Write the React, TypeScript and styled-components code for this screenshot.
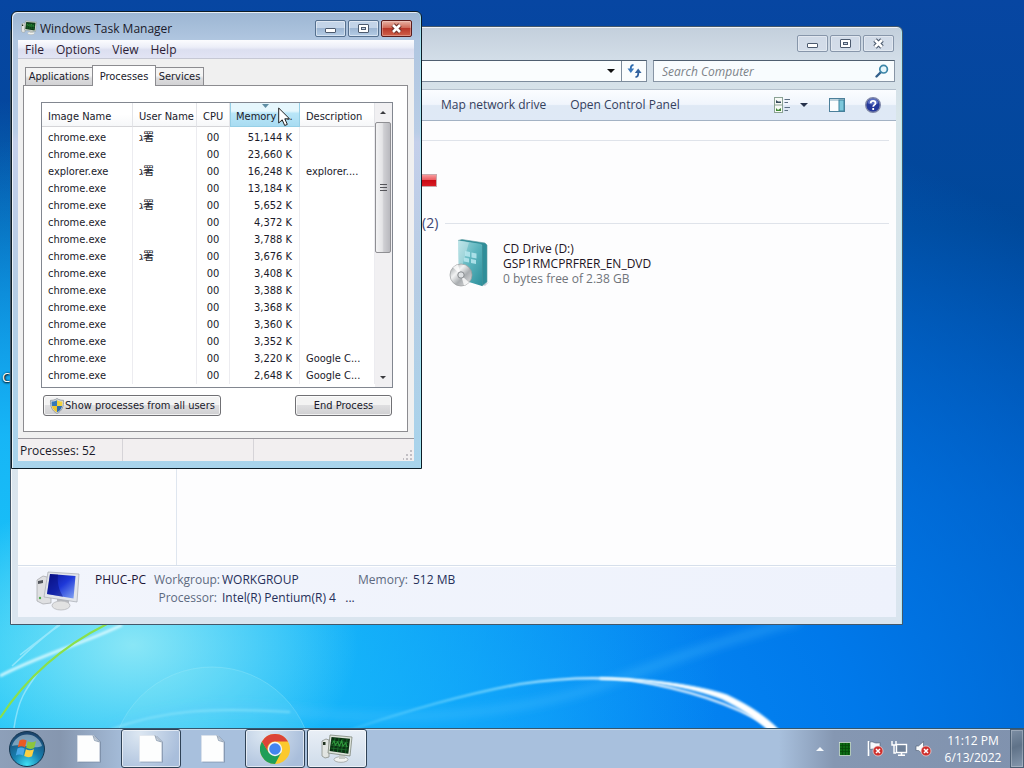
import React from 'react';
import styled, { createGlobalStyle, css } from 'styled-components';

const GlobalStyle = createGlobalStyle`
  *, *::before, *::after { box-sizing: border-box; }
  html, body, #root { height: 100%; }
  body {
    margin: 0;
    overflow: hidden;
    font-family: 'Open Sans', 'Noto Sans', 'Noto Sans CJK JP', sans-serif;
    font-size: 12px;
    color: #1a1a2a;
  }
  button, input { font: inherit; color: inherit; }
`;

/* face of the classic dialog controls: tabs, list and push buttons */
const dialogFont = css`
  font-family: 'DejaVu Sans Condensed', 'Open Sans', 'Noto Sans CJK JP', sans-serif;
  font-size: 11px;
  line-height: 17px;
`;

/* ---------- desktop ---------- */

const Desktop = styled.div`
  position: relative;
  display: flex;
  flex-direction: column;
  height: 100vh;
  overflow: hidden;
  background:
    radial-gradient(ellipse 300px 200px at 13% 84%, rgba(165, 240, 246, 0.8), rgba(120, 230, 250, 0) 75%),
    radial-gradient(ellipse 720px 560px at 0% 86%, #19c6f7 0%, rgba(25, 190, 250, 0.9) 40%, rgba(10, 150, 255, 0) 100%),
    radial-gradient(ellipse 960px 700px at 42% 100%, #0a93fd 0%, rgba(0, 125, 240, 0.9) 45%, rgba(0, 90, 200, 0) 100%),
    linear-gradient(180deg, #0746a2 0%, #00489a 30%, #0051b4 65%, #0055b8 100%);
`;

const WallpaperArt = styled.svg`
  position: absolute;
  inset: 0;
  width: 100%;
  height: 100%;
`;

const WorkArea = styled.main`
  position: relative;
  flex: 1;
  min-height: 0;
`;

const ShortcutLabel = styled.span`
  position: absolute;
  left: 2px;
  top: 369px;
  font-size: 13px;
  line-height: 17px;
  color: #fff;
  text-shadow: 0 1px 2px #000, 1px 0 2px #000;
`;

/* ---------- window chrome ---------- */

const Window = styled.section<{ $active?: boolean }>`
  position: absolute;
  display: flex;
  flex-direction: column;
  border: 1px solid ${p => (p.$active ? '#0c1c26' : '#44586a')};
  border-radius: 6px 6px 0 0;
  background: ${p =>
    p.$active
      ? 'linear-gradient(180deg, #9cb6d3 0, #b0c6e0 28px, #b9cde6 120px, #c4cfea 130px, #b6cce4 60%, #a8d4ec 100%)'
      : 'linear-gradient(180deg, #c3cfdc 0, #d3dee8 34px, #d9e6ea 90px, #dae5ef 100%)'};
  box-shadow: inset 1px 1px 0 rgba(255, 255, 255, 0.75), inset -1px 0 0 rgba(160, 235, 245, 0.7);
`;

const ExplorerFrame = styled(Window)`
  left: 10px;
  top: 26px;
  right: 121px;
  bottom: 103px;
  padding: 0 6px 7px 7px;
`;

const TaskManagerFrame = styled(Window)`
  left: 11px;
  top: 11px;
  width: 411px;
  padding: 0 7px 7px 6px;
`;

const TitleBar = styled.header<{ $tall?: boolean }>`
  display: flex;
  align-items: flex-start;
  height: ${p => (p.$tall ? 32 : 28)}px;
  padding: 8px 2px 0 ${p => (p.$tall ? 4 : 3)}px;
`;

const Title = styled.h1`
  flex: 1;
  margin: 0 0 0 3px;
  font-size: 12px;
  line-height: 18px;
  font-weight: 400;
`;

const CaptionButtons = styled.div`
  display: flex;
  gap: 2px;
  margin-left: auto;
`;

const CaptionButton = styled.button<{ $kind: 'active' | 'idle' | 'close' }>`
  display: flex;
  align-items: center;
  justify-content: center;
  width: 31px;
  height: 17px;
  padding: 0;
  border-radius: 2px;
  ${p =>
    p.$kind === 'active' &&
    css`
      border: 1px solid #55708f;
      background: linear-gradient(180deg, #c3d4e8 0 45%, #9db6d3 50%, #b5cde6 100%);
      box-shadow: inset 0 0 0 1px rgba(255, 255, 255, 0.45);
    `}
  ${p =>
    p.$kind === 'close' &&
    css`
      border: 1px solid #5a1c1c;
      background: linear-gradient(180deg, #e3a394 0 10%, #d06a58 45%, #b8382a 50%, #d0604a 100%);
      box-shadow: inset 0 0 0 1px rgba(255, 255, 255, 0.3);
    `}
  ${p =>
    p.$kind === 'idle' &&
    css`
      border: 1px solid #8796aa;
      background: rgba(215, 224, 236, 0.6);
      box-shadow: inset 0 0 0 1px rgba(255, 255, 255, 0.35);
    `}
`;

const MinimizeGlyph = () => (
  <svg width="13" height="11" viewBox="0 0 13 11">
    <rect x="1.5" y="5.5" width="10" height="4" rx="0.5" fill="#fff" stroke="#4c5a6e" />
  </svg>
);
const MaximizeGlyph = () => (
  <svg width="13" height="11" viewBox="0 0 13 11">
    <rect x="1.5" y="1.5" width="10" height="8" rx="0.5" fill="#fff" stroke="#4c5a6e" />
    <rect x="4.5" y="4.5" width="4" height="2" fill="#c8d4e4" stroke="#4c5a6e" />
  </svg>
);
const CloseGlyph = ({ edge = '#4c5a6e' }: { edge?: string }) => (
  <svg width="13" height="11" viewBox="0 0 13 11">
    <path d="M3 2l7 7M10 2l-7 7" stroke={edge} strokeWidth="4.8" />
    <path d="M3 2l7 7M10 2l-7 7" stroke="#fff" strokeWidth="2.6" />
  </svg>
);

const Caption = ({ active }: { active?: boolean }) => (
  <CaptionButtons>
    <CaptionButton $kind={active ? 'active' : 'idle'} aria-label="Minimize"><MinimizeGlyph /></CaptionButton>
    <CaptionButton $kind={active ? 'active' : 'idle'} aria-label="Maximize"><MaximizeGlyph /></CaptionButton>
    <CaptionButton $kind={active ? 'close' : 'idle'} aria-label="Close">
      <CloseGlyph edge={active ? '#70302a' : undefined} />
    </CaptionButton>
  </CaptionButtons>
);

/* ---------- explorer ---------- */

const AddressRow = styled.div`
  display: flex;
  gap: 6px;
  padding: 1px 1px 0 0;
  height: 30px;
`;

const AddressBar = styled.div`
  display: flex;
  flex: 1;
  height: 22px;
  border: 1px solid #7d8c9c;
  border-top-color: #4f5f70;
  background: #fafdfe;
`;

const AddressInput = styled.input`
  flex: 1;
  min-width: 0;
  border: 0;
  padding: 0;
  background: transparent;
`;

const AddressButton = styled.button<{ $divided?: boolean }>`
  display: flex;
  align-items: center;
  justify-content: center;
  width: ${p => (p.$divided ? 25 : 20)}px;
  padding: 0;
  border: 0;
  border-left: ${p => (p.$divided ? '1px solid #7d8c9c' : '0')};
  background: transparent;
`;

const SearchBox = styled.label`
  display: flex;
  align-items: center;
  width: 242px;
  height: 22px;
  padding: 0 5px 0 8px;
  border: 1px solid #8795a5;
  border-top-color: #4f5f70;
  background: #f8fcfe;
`;

const SearchInput = styled.input`
  flex: 1;
  min-width: 0;
  padding: 0;
  border: 0;
  background: transparent;
  outline: 0;
  &::placeholder { color: #7c8288; font-style: italic; opacity: 1; }
`;

const CommandBar = styled.div`
  display: flex;
  align-items: center;
  height: 32px;
  padding: 0 15px 0 423px;
  border-top: 1px solid #b4c0cc;
  border-bottom: 1px solid #a3b2c4;
  background: linear-gradient(180deg, #fbfdff 0, #f0f5fc 48%, #dfe9f5 52%, #dfe9f6 100%);
`;

const CommandButton = styled.button`
  padding: 0;
  margin-right: 24px;
  border: 0;
  background: transparent;
  color: #34405c;
  line-height: 20px;
`;

const IconCommands = styled.div`
  display: flex;
  align-items: center;
  margin-left: auto;
`;

const IconButton = styled.button<{ $gap: number }>`
  display: flex;
  padding: 0;
  margin-left: ${p => p.$gap}px;
  border: 0;
  background: transparent;
`;

const ExplorerBody = styled.div`
  display: flex;
  flex: 1;
  min-height: 0;
  background: #fdfdfe;
`;

const NavPane = styled.nav`
  width: 159px;
  border-right: 1px solid #dfe6ef;
  background: #fefefe;
`;

const FileArea = styled.div`
  flex: 1;
  display: flex;
  flex-direction: column;
  padding: 19px 7px 0 60px;
`;

const GroupRule = styled.hr`
  width: 100%;
  margin: 0;
  border: 0;
  border-top: 1px solid #dfe3ea;
`;

const CapacityBar = styled.div`
  width: 200px;
  height: 13px;
  margin: 33px 0 26px;
  border: 1px solid #c9a9ac;
  background: linear-gradient(180deg, #f79a9c 0, #ec5a5e 45%, #c90a14 50%, #d81c24 100%);
`;

const GroupHeader = styled.h2`
  display: flex;
  align-items: center;
  gap: 7px;
  margin: 0;
  padding-left: 185px;
  font-size: 14px;
  line-height: 20px;
  font-weight: 400;
  color: #3c4672;
`;

const DriveItem = styled.article`
  display: flex;
  align-items: flex-start;
  gap: 12px;
  padding: 6px 0 0 212px;
`;

const DriveText = styled.div`
  padding-top: 2px;
  line-height: 15px;
  color: #1d1422;
`;

const Muted = styled.div`
  line-height: 16px;
  color: #70747a;
`;

const DetailsPane = styled.footer`
  display: flex;
  height: 52px;
  padding: 5px 18px 0;
  border-top: 1px solid #d6dfeb;
  background: linear-gradient(90deg, #f2f5fc, #eef2fc);
  box-shadow: inset 0 1px 0 #fff;
`;

const DetailsName = styled.div`
  width: 59px;
  margin-left: 15px;
  line-height: 18px;
  color: #1e1638;
  white-space: nowrap;
`;

const DetailsList = styled.dl`
  display: grid;
  grid-template-columns: 63px 131px 50px auto;
  grid-auto-rows: 18px;
  column-gap: 5px;
  margin: 0;
  line-height: 18px;
  white-space: nowrap;
  dt { text-align: right; color: #5d6a80; }
  dd { margin: 0; color: #26305a; }
`;

/* ---------- task manager ---------- */

const ClientArea = styled.div`
  display: flex;
  flex-direction: column;
  background: #f0f0f0;
`;

const MenuBar = styled.nav`
  display: flex;
  gap: 12px;
  height: 19px;
  padding: 0 7px;
  border-bottom: 1px solid #c6c8d4;
  background: linear-gradient(180deg, #fcfcfe 0, #eceef8 40%, #dcdff0 55%, #e2e4f4 100%);
`;

const MenuItem = styled.button`
  padding: 0;
  border: 0;
  background: transparent;
  line-height: 19px;
  color: #2c1c34;
`;

const TabList = styled.div`
  display: flex;
  align-items: flex-end;
  height: 26px;
  padding: 0 7px;
`;

const Tab = styled.button<{ $selected?: boolean; $width: number }>`
  ${dialogFont}
  width: ${p => p.$width}px;
  height: ${p => (p.$selected ? 21 : 18)}px;
  padding: 0;
  border: 1px solid #8c8c90;
  border-bottom: 0;
  text-align: center;
  white-space: nowrap;
  background: linear-gradient(180deg, #f4f4f4 0 45%, #dcdcde 60%, #d2d2d4 100%);
  ${p =>
    p.$selected &&
    css`
      position: relative;
      margin: 0 -1px -1px;
      background: #fff;
    `}
`;

const TabPanel = styled.div`
  margin: 0 6px 6px 5px;
  padding: 16px 14px 15px 17px;
  border: 1px solid #8c8c90;
  background: #fff;
`;

const ListView = styled.div`
  display: flex;
  height: 286px;
  overflow: hidden;
  border: 1px solid #828790;
  background: #fff;
`;

const ProcessTable = styled.table`
  ${dialogFont}
  flex: 1;
  width: 0;
  table-layout: fixed;
  border-collapse: separate;
  border-spacing: 0;
  align-self: flex-start;
`;

const HeaderCell = styled.th<{ $sorted?: boolean }>`
  position: relative;
  height: 24px;
  padding: 3px 4px 0 6px;
  border-right: 1px solid #e3e4e8;
  border-bottom: 1px solid #d5d5d8;
  font-weight: 400;
  text-align: left;
  white-space: nowrap;
  background: linear-gradient(180deg, #fff 0 50%, #f6f7f9 100%);
  ${p =>
    p.$sorted &&
    css`
      padding-left: 5px;
      border: 1px solid #96cfe6;
      border-top: 0;
      background: linear-gradient(180deg, #e6f7fd 0 35%, #b9e6f8 45%, #a9dcf2 100%);
    `}
`;

const SortMark = styled.svg`
  position: absolute;
  top: 1px;
  left: 31px;
`;

const Cell = styled.td<{ $align?: 'center' | 'right' }>`
  height: 17px;
  padding: ${p => (p.$align === 'center' ? '0' : '0 7px 0 6px')};
  border-right: 1px solid #ececf0;
  text-align: ${p => p.$align ?? 'left'};
  white-space: nowrap;
`;

const Spacer = styled.tr`
  td { height: 2px; padding: 0; border-right: 1px solid #ececf0; }
`;

const ScrollBar = styled.div`
  display: flex;
  flex-direction: column;
  width: 17px;
  padding-right: 1px;
  background: #f1f0f2;
`;

const ScrollArrow = styled.button`
  display: flex;
  align-items: center;
  justify-content: center;
  height: 19px;
  padding: 0;
  border: 0;
  background: transparent;
`;

const ScrollTrack = styled.div`
  flex: 1;
`;

const ScrollThumb = styled.div`
  display: flex;
  align-items: center;
  justify-content: center;
  height: 131px;
  border: 1px solid #8f8f93;
  border-radius: 2px;
  background: linear-gradient(90deg, #f3f3f4 0, #e4e4e6 45%, #cfcfd3 55%, #b9b9be 100%);
`;

const ActionRow = styled.div`
  display: flex;
  justify-content: space-between;
  padding: 7px 1px 0 2px;
`;

const PushButton = styled.button<{ $width: number }>`
  ${dialogFont}
  display: flex;
  align-items: center;
  justify-content: center;
  width: ${p => p.$width}px;
  height: 21px;
  padding: 0;
  border: 1px solid #707074;
  border-radius: 3px;
  white-space: nowrap;
  background: linear-gradient(180deg, #f3f3f3 0 45%, #dedee0 50%, #cfcfd1 100%);
  box-shadow: inset 0 0 0 1px rgba(255, 255, 255, 0.7);
`;

const StatusBar = styled.footer`
  display: flex;
  align-items: stretch;
  height: 23px;
  border-top: 1px solid #9a989e;
  background: #f2eff0;
`;

const StatusCell = styled.div<{ $width?: number }>`
  flex: ${p => (p.$width ? 'none' : 1)};
  width: ${p => (p.$width ? `${p.$width}px` : 'auto')};
  padding-left: 2px;
  border-right: ${p => (p.$width ? '1px solid #d6d4d8' : '0')};
  line-height: 23px;
`;

const Grip = styled.svg`
  align-self: flex-end;
`;

const Pointer = styled.svg`
  position: absolute;
  left: 278px;
  top: 107px;
`;

/* ---------- taskbar ---------- */

const Taskbar = styled.footer`
  position: relative;
  display: flex;
  height: 40px;
  border-top: 1px solid #34566e;
  background:
    linear-gradient(90deg, rgba(130, 146, 170, 0.7) 0, rgba(130, 146, 170, 0.9) 60px, rgba(130, 146, 170, 0) 130px),
    linear-gradient(270deg, #8092ae 0, #8597b2 190px, rgba(130, 146, 170, 0) 245px),
    #a8c0dd;
  box-shadow: inset 0 1px 0 #c9dbe9;
`;

const StartButton = styled.button`
  display: flex;
  align-items: center;
  width: 59px;
  padding: 0 0 0 8px;
  border: 0;
  background: transparent;
`;

const TaskButton = styled.button<{ $state?: 'open' | 'active' }>`
  display: flex;
  align-items: center;
  justify-content: center;
  width: 60px;
  height: 39px;
  margin-right: 2px;
  padding: 0;
  border-radius: 3px;
  border: 1px solid ${p => (p.$state ? '#2f4256' : 'transparent')};
  background: ${p =>
    p.$state === 'active'
      ? 'linear-gradient(180deg, #e9eff6, #cfdcea)'
      : p.$state === 'open'
        ? 'radial-gradient(circle at 30% 10%, #dce7f2, #a9bedb 80%)'
        : 'transparent'};
  box-shadow: ${p => (p.$state ? 'inset 0 0 0 1px rgba(255, 255, 255, 0.6)' : 'none')};
`;

const Tray = styled.div`
  display: flex;
  align-items: center;
  margin-left: auto;
`;

const TrayButton = styled.button<{ $gap: number }>`
  display: flex;
  padding: 0;
  margin-right: ${p => p.$gap}px;
  border: 0;
  background: transparent;
`;

const Clock = styled.time`
  width: 58px;
  margin-right: 8px;
  font-size: 12px;
  line-height: 17px;
  text-align: center;
  white-space: nowrap;
  color: #fff;
`;

const ShowDesktop = styled.button`
  align-self: stretch;
  width: 14px;
  padding: 0;
  border: 1px solid #4c5f74;
  background: linear-gradient(160deg, #7c8ea4 0, #5f7288 45%, #8597ac 100%);
  box-shadow: inset 0 0 0 1px rgba(255, 255, 255, 0.25);
`;

/* ---------- icons ---------- */

const Wallpaper = () => (
  <WallpaperArt viewBox="0 0 1024 768" preserveAspectRatio="none" fill="none" aria-hidden="true">
    <defs>
      <filter id="soft" x="-10%" y="-30%" width="120%" height="160%"><feGaussianBlur stdDeviation="0.9" /></filter>
      <filter id="haze" x="-10%" y="-30%" width="120%" height="160%"><feGaussianBlur stdDeviation="4" /></filter>
      <linearGradient id="arc" x1="340" y1="0" x2="780" y2="0" gradientUnits="userSpaceOnUse">
        <stop offset="0" stopColor="#7fe0ff" stopOpacity="0.2" />
        <stop offset="0.35" stopColor="#9be6ff" stopOpacity="0.8" />
        <stop offset="0.6" stopColor="#fff" />
        <stop offset="1" stopColor="#fff" />
      </linearGradient>
    </defs>
    <circle cx="212" cy="768" r="101" fill="#8eeaf4" fillOpacity="0.16" stroke="#a8effa" strokeOpacity="0.3" />
    <path d="M110 730C170 705 230 706 300 712C420 724 520 712 600 686C660 664 710 644 800 620" stroke="#5cc6ff" strokeOpacity="0.3" strokeWidth="8" filter="url(#haze)" />
    <path d="M110 730C160 710 215 707 290 712" stroke="#a6effc" strokeOpacity="0.5" strokeWidth="2" filter="url(#soft)" />
    <path d="M350 730C400 713 460 695 520 684C560 678 600 677 630 680C680 688 735 703 774 730" stroke="url(#arc)" strokeWidth="2" filter="url(#soft)" />
    <path d="M600 678C650 678 700 686 727 695C750 706 765 716 779 730H768C753 716 740 708 722 699C690 687 650 680 600 679Z" fill="#fff" stroke="#e8faff" strokeWidth="1" filter="url(#soft)" />
    <path d="M0 676C40 655 80 645 122 625" stroke="#e2fbff" strokeOpacity="0.85" strokeWidth="3" filter="url(#soft)" />
    <path d="M12 666C30 650 40 638 60 625M20 655C35 643 48 634 58 625M14 728C18 700 25 690 40 670" stroke="#c9f6ff" strokeOpacity="0.5" strokeWidth="1.5" />
    <path d="M0 718C22 684 55 650 107 624" stroke="#8be04a" strokeWidth="2" />
  </WallpaperArt>
);

const TriangleIcon = ({ up, color = '#222', size = 8 }: { up?: boolean; color?: string; size?: number }) => (
  <svg width={size} height={size / 2} viewBox="0 0 8 4">
    <path d={up ? 'M0 4L4 0L8 4Z' : 'M0 0H8L4 4Z'} fill={color} />
  </svg>
);

const RefreshIcon = () => (
  <svg width="15" height="14" viewBox="0 0 15 14" fill="none">
    <path d="M6.5 1C4 1 3.8 3 3.8 5" stroke="#2f6cae" strokeWidth="1.8" />
    <path d="M0.5 4.5H7.2L3.8 9Z" fill="#3a78bb" />
    <path d="M8.5 13c2.5 0 2.8-2 2.8-4" stroke="#2f5f9e" strokeWidth="1.8" />
    <path d="M7.8 9H14.6L11.2 4.5Z" fill="#35649f" />
  </svg>
);

const MagnifierIcon = () => (
  <svg width="14" height="14" viewBox="0 0 14 14" fill="none">
    <path d="M6 8L1.5 12.5" stroke="#33608c" strokeWidth="2.4" strokeLinecap="round" />
    <circle cx="8.6" cy="5.2" r="3.8" fill="#e6f6fc" stroke="#3c86a8" strokeWidth="1.7" />
  </svg>
);

const ViewsIcon = () => (
  <svg width="17" height="16" viewBox="0 0 17 16">
    <rect x="0.5" y="0.5" width="8" height="15" fill="#f7faf6" stroke="#8ba294" />
    <path d="M1 8H8" stroke="#8ba294" />
    <path d="M2 5.5V3l2 1.5h3V6H2Z" fill="#35495a" />
    <path d="M2 14v-3l2 2 3-2v3Z" fill="#3f8a34" />
    <path d="M10.500 2.500H16M10.500 5.500H14M10.500 10.500H16M10.500 13.500H14" stroke="#5d6f83" />
  </svg>
);

const PreviewIcon = () => (
  <svg width="16" height="14" viewBox="0 0 16 14">
    <rect x="0.5" y="0.5" width="15" height="13" fill="#fbfdfe" stroke="#4c7f9a" />
    <path d="M1 2H15" stroke="#7ea6ba" />
    <rect x="10" y="2" width="5" height="11" fill="#7cc8dc" stroke="#3d829c" />
  </svg>
);

const HelpIcon = () => (
  <svg width="16" height="16" viewBox="0 0 16 16" fill="none">
    <circle cx="8" cy="8" r="7.300" fill="#26399a" stroke="#7f87a8" strokeWidth="1.4" />
    <path d="M2.500 6a5.600 5.600 0 0 1 11 0c-3 2-8 2-11 0Z" fill="#7f92da" fillOpacity="0.6" />
    <path d="M5.700 6.200c0-3 4.800-3 4.800 0 0 1.700-2.300 1.700-2.300 3.600M8.200 11v2" stroke="#fff" strokeWidth="1.8" />
  </svg>
);

const CdDriveIcon = () => (
  <svg width="42" height="50" viewBox="0 0 42 50" fill="none">
    <defs>
      <linearGradient id="box" x1="0" y1="0" x2="1" y2="1">
        <stop offset="0" stopColor="#a5dbe0" />
        <stop offset="0.5" stopColor="#5bb4bd" />
        <stop offset="1" stopColor="#2d8f9b" />
      </linearGradient>
      <linearGradient id="disc" x1="0" y1="0" x2="1" y2="1">
        <stop offset="0" stopColor="#8e9396" />
        <stop offset="0.35" stopColor="#f2f3f3" />
        <stop offset="0.6" stopColor="#a9adb0" />
        <stop offset="1" stopColor="#e6e6e6" />
      </linearGradient>
    </defs>
    <path d="M34 46l6-3-4 4Z" fill="#aab" fillOpacity="0.6" />
    <path d="M9 1.500L13 0.500L36 4L38 6V43L33 47V6Z" fill="#2f8e99" stroke="#5f9aa0" strokeWidth="0.6" />
    <path d="M9 1.500L31 4.800Q33 5.200 33 7V47L10 40Z" fill="url(#box)" />
    <path d="M9 1.500L20 3.500L10 38Z" fill="#fff" fillOpacity="0.3" />
    <path d="M16 12l5 1v5l-5-1ZM22.500 13.400l5 1v5l-5-1ZM15 18.500l5 1v4l-5-1ZM22 20l5 1v4l-5-1Z" fill="#b8e8ee" fillOpacity="0.85" />
    <circle cx="12" cy="36" r="11" fill="url(#disc)" stroke="#9a9c9e" strokeWidth="0.700" />
    <path d="M12 36L4 28.500A11 11 0 0 1 9 25.500ZM12 36l8 7.500a11 11 0 0 1-5 3Z" fill="#fff" fillOpacity="0.8" />
    <circle cx="12" cy="36" r="3.200" fill="#dfe2e4" stroke="#85898c" />
  </svg>
);

const ComputerIcon = () => (
  <svg width="44" height="40" viewBox="0 0 44 40" fill="none">
    <defs>
      <linearGradient id="screen" x1="0" y1="0" x2="1" y2="1">
        <stop offset="0" stopColor="#0a1290" />
        <stop offset="0.5" stopColor="#1e38d8" />
        <stop offset="1" stopColor="#86a8f4" />
      </linearGradient>
    </defs>
    <path d="M1 9l6-4 8 2v25l-8 1-6-3Z" fill="#dfe0e2" stroke="#a2a4a8" strokeWidth="0.700" />
    <path d="M2 10l5-1v3l-5 1Z" fill="#50545a" />
    <circle cx="4" cy="27" r="1.200" fill="#4aa84a" />
    <path d="M21 26l12 3v5l-12-2Z" fill="#b9bbc0" />
    <ellipse cx="25" cy="34.500" rx="9" ry="4.500" fill="#e2e2e2" stroke="#b0b2b6" strokeWidth="0.700" />
    <path d="M12 1L43 3L41 31L8 26Z" fill="#e2e5ea" stroke="#a5a9b0" strokeWidth="0.700" />
    <path d="M14 3L39.500 5L37.500 27.500L11 23Z" fill="url(#screen)" />
    <path d="M14 3L22 3.600C21 12 23 19 27 25.700L11 23Z" fill="#060c70" fillOpacity="0.45" />
  </svg>
);

const MonitorIcon = ({ size = 32 }: { size?: number }) => (
  <svg width={size} height={size} viewBox="0 0 32 32" fill="none">
    <path d="M1 8l4-2 3 1v17l-4 1-3-2Z" fill="#e2e5e2" stroke="#8a8f8a" strokeWidth="0.800" />
    <path d="M2 9h2.500v3H2Z" fill="#20301f" />
    <ellipse cx="20" cy="26.500" rx="7" ry="2.800" fill="#f0f2f0" stroke="#9da19d" strokeWidth="0.800" />
    <path d="M18 22h6v4h-6Z" fill="#c6cac6" />
    <path d="M9 2L31 4L29 23L7 20Z" fill="#dfe5dc" stroke="#7f867c" strokeWidth="0.800" />
    <path d="M10.500 4L29 5.700L27.300 20.800L8.600 18Z" fill="#0b3313" />
    <path d="M10 8l17 1.500M10 12l17 1.500M9.500 15l17 2M14 5l-1.500 13M18 5l-1.500 14M22 5.500L20.500 19M26 6L24.500 20" stroke="#1f7a30" strokeWidth="0.700" />
    <path d="M11 11l2-3 1.500 4 2-3 2 4 2-5 1.500 5 2.500-3 1.500 4" stroke="#2f9a3c" strokeWidth="1.100" />
  </svg>
);

const ShieldIcon = () => (
  <svg width="16" height="16" viewBox="0 0 16 16">
    <path d="M8 0.500C10 2 12.500 2.400 14.500 2.300C15 8 13 13 8 15.500C3 13 1 8 1.500 2.300C3.500 2.400 6 2 8 0.500Z" fill="#d9dde0" stroke="#8a9198" strokeWidth="0.800" />
    <path d="M8 2.200V8H2.900C2.600 6.300 2.500 5 2.600 3.500C4.800 3.500 6.500 3.100 8 2.200Z" fill="#3678b8" />
    <path d="M8 2.200V8H13.100C13.400 6.300 13.500 5 13.400 3.500C11.200 3.500 9.500 3.100 8 2.200Z" fill="#f2d23c" />
    <path d="M8 8H2.900C3.600 11 5.200 12.900 8 14.300Z" fill="#eec62e" />
    <path d="M8 8H13.100C12.400 11 10.800 12.900 8 14.300Z" fill="#2e6cae" />
  </svg>
);

const PageIcon = () => (
  <svg width="28" height="32" viewBox="0 0 28 32">
    <path d="M3.500 3H20L26 9V29.500H3.500Z" fill="#64748c" fillOpacity="0.5" />
    <path d="M2.500 2.500H18.500L24.500 8.500V28.500H2.500Z" fill="#fdfefe" stroke="#dde3ea" strokeWidth="0.600" />
    <path d="M18 2.500L19.500 7.500L24.500 9Z" fill="#c8d2de" stroke="#8092a8" strokeWidth="0.700" />
  </svg>
);

const ChromeIcon = () => (
  <svg width="30" height="30" viewBox="0 0 30 30">
    <circle cx="15" cy="15" r="15" fill="#fbc92e" />
    <path d="M2 7.500A15 15 0 0 0 15 30L21.200 18.500L15 15L8.800 18.500Z" fill="#1f9e58" />
    <path d="M2 7.500A15 15 0 0 1 28 7.500H15A7.300 7.300 0 0 0 8.500 18.600Z" fill="#dc4437" />
    <circle cx="15" cy="15" r="7.200" fill="#f4f6f8" />
    <circle cx="15" cy="15" r="5.800" fill="#4285f0" />
  </svg>
);

const StartOrb = () => (
  <svg width="38" height="38" viewBox="0 0 38 38">
    <defs>
      <radialGradient id="orb" cx="0.5" cy="0.95" r="0.9">
        <stop offset="0" stopColor="#3fe0f4" />
        <stop offset="0.45" stopColor="#1780b0" />
        <stop offset="1" stopColor="#1c456e" />
      </radialGradient>
    </defs>
    <circle cx="19" cy="19" r="17.500" fill="url(#orb)" stroke="#143650" />
    <path d="M4 16A15.500 15.500 0 0 1 34 16C26 20 12 13 4 16Z" fill="#d5e6f2" fillOpacity="0.5" />
    <path d="M11.500 10.500C14 9 16.500 9.200 18.600 10.600L17 17.400C14.800 16 12.400 15.800 9.800 17.200Z" fill="#ea5a24" />
    <path d="M19.800 11.200C22.300 12.600 25 12.600 28 11L26.200 18C23.400 19.400 20.600 19.200 18.200 17.800Z" fill="#8cc63c" />
    <path d="M9.500 18.500C12 17.200 14.500 17.300 16.700 18.700L15 25.500C12.700 24.200 10.200 24 7.800 25.500Z" fill="#4aa8e8" />
    <path d="M17.900 19.200C20.300 20.600 23 20.700 26 19.200L24 26.200C21.400 27.600 18.700 27.400 16.200 26Z" fill="#fbd043" />
  </svg>
);

const ErrorDot = () => (
  <g>
    <circle cx="11" cy="11" r="5" fill="#cf2f2c" stroke="#f0dada" strokeWidth="0.700" />
    <path d="M9 9l4 4M13 9l-4 4" stroke="#fff" strokeWidth="1.500" />
  </g>
);

const CpuMeterIcon = () => (
  <svg width="12" height="14" viewBox="0 0 12 14">
    <rect x="0.500" y="0.500" width="11" height="13" fill="#0d6a14" stroke="#dfe9e0" strokeWidth="0.700" />
    <path d="M1 3.500H11M1 6.500H11M1 9.500H11M3.500 1V13M6.500 1V13M9.500 1V13" stroke="#064a0a" strokeWidth="0.800" />
  </svg>
);

const ActionCenterIcon = () => (
  <svg width="17" height="17" viewBox="0 0 17 17">
    <path d="M1.500 1V16" stroke="#fff" strokeWidth="1.600" />
    <path d="M3 2c3-1 4 1 6 1s3 0 4-.5V9c-2 1-3 0-5 0s-3 0-5 .5Z" fill="#f6f9fc" stroke="#4b5a70" strokeWidth="0.600" />
    <ErrorDot />
  </svg>
);

const NetworkIcon = () => (
  <svg width="17" height="17" viewBox="0 0 17 17" fill="none">
    <rect x="5.500" y="4.500" width="10" height="8" fill="#6e8098" stroke="#fff" strokeWidth="1.400" />
    <path d="M10.500 13v2M7 15.300H14" stroke="#fff" strokeWidth="1.500" />
    <path d="M1 1V5H5V1M3 5V13H5" stroke="#fff" strokeWidth="1.400" />
  </svg>
);

const SpeakerIcon = () => (
  <svg width="17" height="17" viewBox="0 0 17 17">
    <path d="M1 6H3.500L8.500 1.500V14.500L3.500 10.500H1Z" fill="#f8fafc" stroke="#4b5a70" strokeWidth="0.600" />
    <ErrorDot />
  </svg>
);

/* ---------- content ---------- */

type Process = { name: string; user?: boolean; memory: string; description?: string };

const userName = 'ג署';

const processes: Process[] = [
  { name: 'chrome.exe', user: true, memory: '51,144 K' },
  { name: 'chrome.exe', memory: '23,660 K' },
  { name: 'explorer.exe', user: true, memory: '16,248 K', description: 'explorer....' },
  { name: 'chrome.exe', memory: '13,184 K' },
  { name: 'chrome.exe', user: true, memory: '5,652 K' },
  { name: 'chrome.exe', memory: '4,372 K' },
  { name: 'chrome.exe', memory: '3,788 K' },
  { name: 'chrome.exe', user: true, memory: '3,676 K' },
  { name: 'chrome.exe', memory: '3,408 K' },
  { name: 'chrome.exe', memory: '3,388 K' },
  { name: 'chrome.exe', memory: '3,368 K' },
  { name: 'chrome.exe', memory: '3,360 K' },
  { name: 'chrome.exe', memory: '3,352 K' },
  { name: 'chrome.exe', memory: '3,220 K', description: 'Google C...' },
  { name: 'chrome.exe', memory: '2,648 K', description: 'Google C...' },
];

const columnWidths = [91, 64, 33, 70];

const Explorer = () => (
  <ExplorerFrame aria-label="Computer">
    <TitleBar $tall><Caption /></TitleBar>
    <AddressRow>
      <AddressBar>
        <AddressInput aria-label="Address" />
        <AddressButton aria-label="Previous locations"><TriangleIcon color="#111" /></AddressButton>
        <AddressButton $divided aria-label="Refresh"><RefreshIcon /></AddressButton>
      </AddressBar>
      <SearchBox>
        <SearchInput type="text" placeholder="Search Computer" aria-label="Search Computer" />
        <MagnifierIcon />
      </SearchBox>
    </AddressRow>
    <CommandBar>
      <CommandButton>Map network drive</CommandButton>
      <CommandButton>Open Control Panel</CommandButton>
      <IconCommands>
        <IconButton $gap={0} aria-label="Change view"><ViewsIcon /></IconButton>
        <IconButton $gap={9} aria-label="More views"><TriangleIcon color="#26324a" /></IconButton>
        <IconButton $gap={21} aria-label="Preview pane"><PreviewIcon /></IconButton>
        <IconButton $gap={20} aria-label="Help"><HelpIcon /></IconButton>
      </IconCommands>
    </CommandBar>
    <ExplorerBody>
      <NavPane />
      <FileArea>
        <GroupRule />
        <CapacityBar />
        <GroupHeader>(2)<GroupRule as="span" /></GroupHeader>
        <DriveItem>
          <CdDriveIcon />
          <DriveText>
            <div>CD Drive (D:)</div>
            <div>GSP1RMCPRFRER_EN_DVD</div>
            <Muted>0 bytes free of 2.38 GB</Muted>
          </DriveText>
        </DriveItem>
      </FileArea>
    </ExplorerBody>
    <DetailsPane>
      <ComputerIcon />
      <DetailsName>PHUC-PC</DetailsName>
      <DetailsList>
        <dt>Workgroup:</dt><dd>WORKGROUP</dd>
        <dt>Memory:</dt><dd>512 MB</dd>
        <dt>Processor:</dt><dd>Intel(R) Pentium(R) 4 &nbsp; ...</dd>
      </DetailsList>
    </DetailsPane>
  </ExplorerFrame>
);

const TaskManager = () => (
  <TaskManagerFrame $active aria-label="Windows Task Manager">
    <TitleBar>
      <MonitorIcon size={16} />
      <Title>Windows Task Manager</Title>
      <Caption active />
    </TitleBar>
    <ClientArea>
      <MenuBar>
        {['File', 'Options', 'View', 'Help'].map(item => <MenuItem key={item}>{item}</MenuItem>)}
      </MenuBar>
      <TabList role="tablist">
        <Tab role="tab" $width={68}>Applications</Tab>
        <Tab role="tab" $width={64} $selected aria-selected>Processes</Tab>
        <Tab role="tab" $width={49}>Services</Tab>
      </TabList>
      <TabPanel role="tabpanel">
        <ListView>
          <ProcessTable>
            <colgroup>
              {columnWidths.map((width, i) => <col key={i} style={{ width }} />)}
              <col />
            </colgroup>
            <thead>
              <tr>
                <HeaderCell>Image Name</HeaderCell>
                <HeaderCell>User Name</HeaderCell>
                <HeaderCell>CPU</HeaderCell>
                <HeaderCell $sorted aria-sort="descending">
                  <SortMark width="7" height="4" viewBox="0 0 7 4"><path d="M0 0H7L3.500 4Z" fill="#5f8ea4" /></SortMark>
                  Memory (...
                </HeaderCell>
                <HeaderCell>Description</HeaderCell>
              </tr>
            </thead>
            <tbody>
              <Spacer><td /><td /><td /><td /><td /></Spacer>
              {processes.map((p, i) => (
                <tr key={i}>
                  <Cell>{p.name}</Cell>
                  <Cell>{p.user ? userName : ''}</Cell>
                  <Cell $align="center">00</Cell>
                  <Cell $align="right">{p.memory}</Cell>
                  <Cell>{p.description}</Cell>
                </tr>
              ))}
            </tbody>
          </ProcessTable>
          <ScrollBar>
            <ScrollArrow aria-label="Scroll up"><TriangleIcon up size={6} color="#3a3a3e" /></ScrollArrow>
            <ScrollTrack>
              <ScrollThumb>
                <svg width="7" height="8" viewBox="0 0 7 8"><path d="M0 0.500H7M0 3.500H7M0 6.500H7" stroke="#55555a" /></svg>
              </ScrollThumb>
            </ScrollTrack>
            <ScrollArrow aria-label="Scroll down"><TriangleIcon size={6} color="#3a3a3e" /></ScrollArrow>
          </ScrollBar>
        </ListView>
        <ActionRow>
          <PushButton $width={178}><ShieldIcon />Show processes from all users</PushButton>
          <PushButton $width={97}>End Process</PushButton>
        </ActionRow>
      </TabPanel>
      <StatusBar>
        <StatusCell $width={105}>Processes: 52</StatusCell>
        <StatusCell $width={131} />
        <StatusCell />
        <Grip width="11" height="11" viewBox="0 0 11 11">
          <path d="M7 0h2v2h-2zM7 4h2v2h-2zM7 8h2v2h-2zM3 4h2v2H3zM3 8h2v2H3zM0 8h1v2H0z" fill="#c2bfc4" />
        </Grip>
      </StatusBar>
    </ClientArea>
  </TaskManagerFrame>
);

export default function App() {
  return (
    <>
      <GlobalStyle />
      <Desktop>
        <Wallpaper />
        <WorkArea>
          <ShortcutLabel>C</ShortcutLabel>
          <Explorer />
          <TaskManager />
          <Pointer width="13" height="20" viewBox="0 0 13 20">
            <path d="M0.700 1V16L4.200 12.800L6.700 18.500L9.300 17.400L6.800 11.800H11.500Z" fill="#fff" stroke="#222" strokeWidth="1" />
          </Pointer>
        </WorkArea>
        <Taskbar>
          <StartButton aria-label="Start"><StartOrb /></StartButton>
          <TaskButton aria-label="Document 1"><PageIcon /></TaskButton>
          <TaskButton $state="open" aria-label="Document 2"><PageIcon /></TaskButton>
          <TaskButton aria-label="Document 3"><PageIcon /></TaskButton>
          <TaskButton $state="open" aria-label="Google Chrome"><ChromeIcon /></TaskButton>
          <TaskButton $state="active" aria-label="Task Manager"><MonitorIcon /></TaskButton>
          <Tray>
            <TrayButton $gap={15} aria-label="Show hidden icons"><TriangleIcon up color="#f4f8fc" /></TrayButton>
            <TrayButton $gap={16} aria-label="CPU usage"><CpuMeterIcon /></TrayButton>
            <TrayButton $gap={7} aria-label="Action Center"><ActionCenterIcon /></TrayButton>
            <TrayButton $gap={7} aria-label="Network"><NetworkIcon /></TrayButton>
            <TrayButton $gap={12} aria-label="Volume"><SpeakerIcon /></TrayButton>
            <Clock>11:12 PM<br />6/13/2022</Clock>
            <ShowDesktop aria-label="Show desktop" />
          </Tray>
        </Taskbar>
      </Desktop>
    </>
  );
}
